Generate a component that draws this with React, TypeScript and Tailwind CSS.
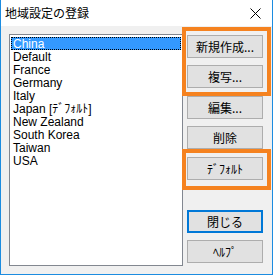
import React from 'react';

const regions = [
  'China',
  'Default',
  'France',
  'Germany',
  'Italy',
  'Japan [ﾃﾞﾌｫﾙﾄ]',
  'New Zealand',
  'South Korea',
  'Taiwan',
  'USA',
];

const font = { fontFamily: '"Liberation Sans", "Noto Sans CJK JP", sans-serif' };

const Btn = ({ label, primary = false, className = '' }: { label: string; primary?: boolean; className?: string }) => (
  <button
    className={
      'w-[76px] h-[23px] flex items-center justify-center text-[12px] leading-none text-black bg-[#e1e1e1] ' +
      (primary ? 'border-2 border-[#0078d7] ' : 'border border-[#adadad] ') +
      className
    }
  >
    {label}
  </button>
);

export default function App() {
  return (
    <div
      className="relative w-[273px] h-[275px] flex flex-col bg-[#f0f0f0] border-x border-b border-[#1c8ce0] overflow-hidden"
      style={font}
    >
      {/* Title bar */}
      <div className="h-[26px] shrink-0 bg-white flex items-center justify-between pl-[4px] pr-[11px]">
        <span className="text-[12px] text-black" style={{ fontFamily: '"Noto Sans CJK JP", sans-serif' }}>
          地域設定の登録
        </span>
        <svg width="11" height="11" viewBox="0 0 11 11" className="mt-[1px]">
          <path d="M0.5 0.5 L10.5 10.5 M10.5 0.5 L0.5 10.5" stroke="#000" strokeWidth="1" fill="none" />
        </svg>
      </div>

      {/* Body */}
      <div className="flex-1 flex pt-[8px] pl-[8px] pr-[9px] pb-[8px] gap-[4px]">
        <div className="w-[174px] h-[232px] bg-white border border-[#828790] pt-[2px] px-[1px]">
          {regions.map((r, i) => (
            <div
              key={r}
              className={
                'h-[13px] pl-[2px] flex items-center text-[12px] leading-none ' +
                (i === 0 ? 'bg-[#3399ff] text-white outline-1 outline-dotted outline-offset-[-1px] outline-black' : 'text-black')
              }
            >
              {r}
            </div>
          ))}
        </div>

        <div className="flex flex-col pt-[1px]" style={{ fontFamily: '"Noto Sans CJK JP", sans-serif' }}>
          <Btn label="新規作成..." />
          <Btn label="複写..." className="mt-[7px]" />
          <Btn label="編集..." className="mt-[8px]" />
          <Btn label="削除" className="mt-[7px]" />
          <Btn label="ﾃﾞﾌｫﾙﾄ" className="mt-[8px]" />
          <Btn label="閉じる" primary className="mt-[30px]" />
          <Btn label="ﾍﾙﾌﾟ" className="mt-[7px]" />
        </div>
      </div>

      {/* Orange annotation highlights */}
      <div className="absolute left-[181px] top-[27px] w-[89px] h-[69px] border-4 border-[#f5821f]" />
      <div className="absolute left-[181px] top-[149px] w-[89px] h-[41px] border-4 border-[#f5821f]" />
    </div>
  );
}
